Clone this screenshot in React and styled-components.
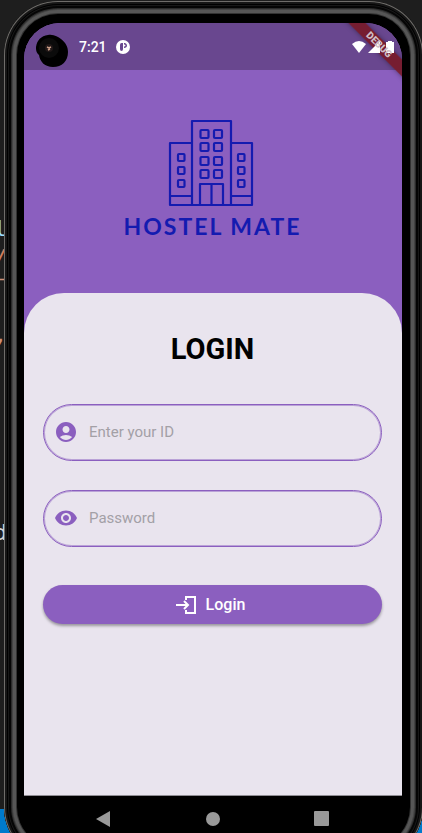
import React from "react";
import styled, { createGlobalStyle } from "styled-components";
import { MdAccountCircle, MdVisibility } from "react-icons/md";

const purple = "#8b5fbf";
const ink = "#141bb0";

const GlobalStyle = createGlobalStyle`
  * { box-sizing: border-box; }
  html, body, #root { height: 100%; }
  body {
    margin: 0;
    overflow: hidden;
    background: #1e1e1e;
    font-family: Roboto, "Liberation Sans", sans-serif;
  }
`;

const Desktop = styled.div`
  height: 100%;
  display: grid;
  grid-template: minmax(0, 1fr) / minmax(0, 1fr);
  overflow: hidden;
  > * { grid-area: 1 / 1; }
`;

const Editor = styled.div`
  display: flex;
  flex-direction: column;
`;

const CodeArea = styled.pre`
  flex: 1;
  margin: 0;
  padding-top: 216px;
  width: 7px;
  overflow: hidden;
  display: flex;
  flex-direction: column;
  align-items: flex-end;
  font: 22px/26px "DejaVu Sans Mono", monospace;
`;

const CodeLine = styled.span`
  flex: none;
  line-height: ${(p) => p.$line || 26}px;
  margin-bottom: ${(p) => p.$gap || 0}px;
  color: ${(p) => p.$color};
`;

const EditorStatus = styled.div`
  height: 24px;
  background: #007acc;
`;

const Phone = styled.div`
  align-self: start;
  margin: 1px -1px 0 4px;
  height: calc(100vh + 27px);
  padding: 22px 21px 0 20px;
  border-radius: 54px;
  display: flex;
  flex-direction: column;
  background: #000;
  box-shadow:
    inset 0 0 0 1px #6f6d6a,
    inset 0 0 0 3px #161616,
    inset 0 0 0 4px #000,
    inset 0 0 0 5px #181818,
    inset 0 0 0 7px #050505,
    inset 0 0 0 8px #2b2b2b,
    inset 0 0 0 9px #444,
    inset 0 0 0 12px #565656,
    inset 0 0 0 13px #333;
`;

const Screen = styled.div`
  position: relative;
  flex: 1;
  display: flex;
  flex-direction: column;
  overflow: hidden;
  border-radius: 36px 36px 0 0;
  background: ${purple};
`;

const StatusBar = styled.header`
  height: 47px;
  flex: none;
  padding: 0 7px 0 12px;
  display: flex;
  align-items: center;
  background: #69478f;
  color: #fff;
`;

const Camera = styled.svg`
  width: 32px;
  height: 34px;
  margin-top: 8px;
`;

const Clock = styled.time`
  margin-left: 11px;
  font-size: 14px;
  font-weight: 500;
  line-height: 20px;
`;

const AppBadge = styled.svg`
  width: 14px;
  height: 14px;
  margin-left: 9px;
`;

const Signals = styled.svg`
  position: relative;
  z-index: 2;
  width: 44px;
  height: 14px;
  margin-left: auto;
`;

const RibbonStrip = styled.div`
  position: absolute;
  z-index: 1;
  top: 16px;
  right: -29px;
  width: 104px;
  height: 12px;
  transform: rotate(45deg);
  background: rgba(120, 24, 36, 0.88);
  box-shadow: 0 0 5px rgba(0, 0, 0, 0.4);
`;

const RibbonLabel = styled(RibbonStrip)`
  z-index: 3;
  background: none;
  box-shadow: none;
  color: #d0bfc6;
  font-size: 10px;
  font-weight: 900;
  line-height: 12px;
  text-align: center;
`;

const Brand = styled.div`
  height: 223px;
  flex: none;
  padding-top: 49px;
  display: flex;
  flex-direction: column;
  align-items: center;
  color: ${ink};
`;

const Building = styled.svg`
  width: 86px;
  height: 88px;
  margin-right: 4px;
`;

const BrandName = styled.div`
  margin-top: 5px;
  margin-right: 1px;
  font-family: Lato, sans-serif;
  font-size: 23px;
  font-weight: 700;
  line-height: 28px;
  letter-spacing: 2px;
`;

const Sheet = styled.main`
  flex: 1;
  padding: 38px 20px 0 19px;
  border-bottom: 1px solid #8f8d93;
  border-radius: 40px 40px 0 0;
  background: #e9e4ee;
`;

const Title = styled.h1`
  margin: 0 0 37px;
  font-size: 29px;
  font-weight: 700;
  line-height: 36px;
  text-align: center;
`;

const Field = styled.label`
  height: 57px;
  margin-bottom: 29px;
  padding: 0 20px 2px 10px;
  display: flex;
  align-items: center;
  gap: 11px;
  border: 1px solid ${purple};
  border-radius: 29px;
  box-shadow: inset 0 0 0 1px rgba(139, 95, 191, 0.5);
  color: ${purple};
  svg { width: 24px; height: 24px; flex: none; }
`;

const Input = styled.input`
  flex: 1;
  min-width: 0;
  padding: 0;
  border: 0;
  outline: 0;
  background: none;
  color: #222;
  font: 400 15px/20px Roboto, sans-serif;
  &::placeholder { color: #a3a0a6; opacity: 1; }
`;

const LoginButton = styled.button`
  width: 100%;
  height: 39px;
  margin-top: 38px;
  padding: 0 4px 0 0;
  display: flex;
  align-items: center;
  justify-content: center;
  gap: 8px;
  border: 0;
  border-radius: 20px;
  background: ${purple};
  box-shadow: 0 2px 3px rgba(0, 0, 0, 0.35);
  color: #fff;
  font: 500 16px/20px Roboto, sans-serif;
  svg { width: 22px; height: 20px; }
`;

const NavBar = styled.nav`
  height: 65px;
  flex: none;
  padding: 11px 68px 0 67px;
  display: flex;
  align-items: flex-start;
  justify-content: space-between;
`;

const NavButton = styled.button`
  width: 24px;
  height: 24px;
  padding: 0;
  border: 0;
  background: none;
  color: #999;
  svg { display: block; width: 24px; height: 24px; }
`;

const towerWindows = [14, 27, 41, 54];
const wingWindows = [38, 51, 64];

function BuildingMark() {
  return (
    <Building viewBox="0 0 86 88" fill="none" stroke="currentColor" strokeWidth="2.200" strokeLinejoin="round" aria-hidden="true">
      <path d="M24 87V2h39v85M24 24H2v62h82V24H63M2 77h22M63 77h21" />
      <path d="M32 86V65h23v21M43.500 65v21" />
      {towerWindows.map((y) => (
        <g key={y}>
          <rect x="32.500" y={y - 3} width="8" height="8" rx="1" />
          <rect x="46" y={y - 3} width="8" height="8" rx="1" />
        </g>
      ))}
      {wingWindows.map((y) => (
        <g key={y}>
          <rect x="10" y={y - 3} width="6.500" height="7" rx="1" />
          <rect x="70" y={y - 3} width="6.500" height="7" rx="1" />
        </g>
      ))}
    </Building>
  );
}

export default function App() {
  return (
    <>
      <GlobalStyle />
      <Desktop>
        <Editor aria-hidden="true">
          <CodeArea>
            <CodeLine $color="#9cdcfe" $gap={6}>l</CodeLine>
            <CodeLine $color="#ce7f5f" $line={20}>/</CodeLine>
            <CodeLine $color="#ce9178" $line={20} $gap={34}>–</CodeLine>
            <CodeLine $color="#ce9178" $gap={172}>,</CodeLine>
            <CodeLine $color="#d4d4d4">d</CodeLine>
          </CodeArea>
          <EditorStatus />
        </Editor>
        <Phone>
          <Screen>
            <StatusBar>
              <Camera viewBox="0 0 32 34" aria-hidden="true">
                <path d="M12 1c6-1 10 2 13 4 5 4 7 8 7 13 0 9-6 15-15 15-8 0-13-5-14-12C0 18 0 16 0 13 1 6 5 2 12 1Z" fill="#000" />
                <circle cx="13" cy="14" r="10" fill="#0b0b0b" />
                <circle cx="13" cy="14" r="4" fill="#201818" />
                <path d="m11 13 2 1 2-1M12 16l2-1" stroke="#c79b85" strokeWidth="1.500" fill="none" />
              </Camera>
              <Clock>7:21</Clock>
              <AppBadge viewBox="0 0 14 14" aria-hidden="true">
                <circle cx="7" cy="7" r="7" fill="#fff" />
                <path d="M7 3H5.500Q4 3 4 5v4q0 2 1.500 2T7 9Z" fill="#69478f" />
                <path d="M8 3h1q2 .5 2 2.500T8 8V6.500Q9.500 6.500 9.500 5.500T8 4.500Z" fill="#69478f" />
              </AppBadge>
              <Signals viewBox="0 0 44 14" fill="#fff" aria-hidden="true">
                <path d="M1 4q7-6 14 0L8 13Z" />
                <path d="M17 13 29 1v12Z" />
                <path d="M35 2h2V1h4v1h2v11h-8Z" />
              </Signals>
            </StatusBar>
            <Brand>
              <BuildingMark />
              <BrandName>HOSTEL MATE</BrandName>
            </Brand>
            <Sheet>
              <Title>LOGIN</Title>
              <Field>
                <MdAccountCircle aria-hidden="true" />
                <Input type="text" placeholder="Enter your ID" aria-label="Enter your ID" />
              </Field>
              <Field>
                <MdVisibility aria-hidden="true" />
                <Input type="password" placeholder="Password" aria-label="Password" />
              </Field>
              <LoginButton type="button">
                <svg viewBox="0 0 22 20" fill="none" stroke="currentColor" strokeWidth="2" aria-hidden="true">
                  <path d="M0 10h12M8 6l4 4-4 4M10 5V2h9v16h-9v-3" />
                </svg>
                Login
              </LoginButton>
            </Sheet>
            <RibbonStrip />
            <RibbonLabel>DEBUG</RibbonLabel>
          </Screen>
          <NavBar>
            <NavButton type="button" aria-label="Back">
              <svg viewBox="0 0 24 24"><path d="M5 12 19 4v16Z" fill="currentColor" /></svg>
            </NavButton>
            <NavButton type="button" aria-label="Home">
              <svg viewBox="0 0 24 24"><circle cx="12" cy="12" r="7" fill="currentColor" /></svg>
            </NavButton>
            <NavButton type="button" aria-label="Overview">
              <svg viewBox="0 0 24 24"><rect x="4" y="4" width="15" height="15" rx="1" fill="currentColor" /></svg>
            </NavButton>
          </NavBar>
        </Phone>
      </Desktop>
    </>
  );
}
